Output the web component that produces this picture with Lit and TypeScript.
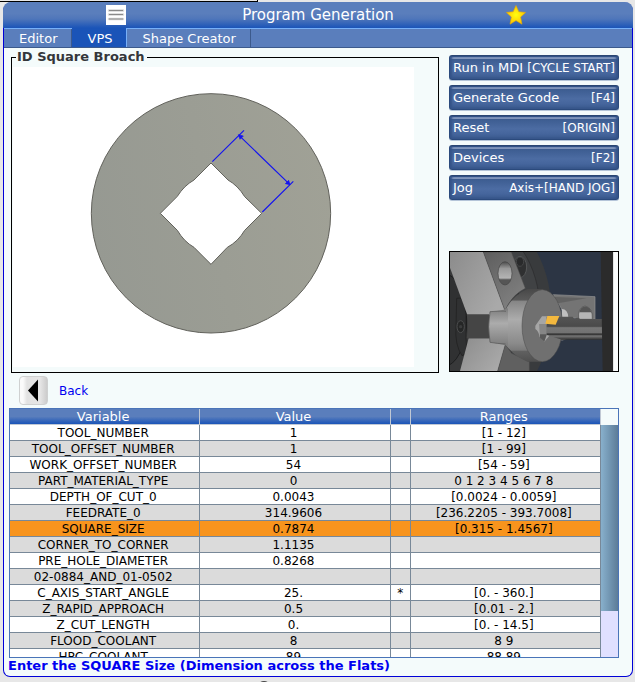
import { LitElement, html, css } from "lit";
import { customElement, property, state } from "lit/decorators.js";
import { classMap } from "lit/directives/class-map.js";

interface Row {
  name: string;
  value: string;
  mark?: string;
  range: string;
}

const ROWS: Row[] = [
  { name: "TOOL_NUMBER", value: "1", range: "[1 - 12]" },
  { name: "TOOL_OFFSET_NUMBER", value: "1", range: "[1 - 99]" },
  { name: "WORK_OFFSET_NUMBER", value: "54", range: "[54 - 59]" },
  { name: "PART_MATERIAL_TYPE", value: "0", range: "0 1 2 3 4 5 6 7 8" },
  { name: "DEPTH_OF_CUT_0", value: "0.0043", range: "[0.0024 - 0.0059]" },
  { name: "FEEDRATE_0", value: "314.9606", range: "[236.2205 - 393.7008]" },
  { name: "SQUARE_SIZE", value: "0.7874", range: "[0.315 - 1.4567]" },
  { name: "CORNER_TO_CORNER", value: "1.1135", range: "" },
  { name: "PRE_HOLE_DIAMETER", value: "0.8268", range: "" },
  { name: "02-0884_AND_01-0502", value: "", range: "" },
  { name: "C_AXIS_START_ANGLE", value: "25.", mark: "*", range: "[0. - 360.]" },
  { name: "Z_RAPID_APPROACH", value: "0.5", range: "[0.01 - 2.]" },
  { name: "Z_CUT_LENGTH", value: "0.", range: "[0. - 14.5]" },
  { name: "FLOOD_COOLANT", value: "8", range: "8 9" },
  { name: "HPC_COOLANT", value: "89", range: "88 89" },
];

const ACTIONS = [
  { label: "Run in MDI", key: "[CYCLE START]" },
  { label: "Generate Gcode", key: "[F4]" },
  { label: "Reset", key: "[ORIGIN]" },
  { label: "Devices", key: "[F2]" },
  { label: "Jog", key: "Axis+[HAND JOG]" },
];

const TABS = ["Editor", "VPS", "Shape Creator"];

@customElement("broach-diagram")
class BroachDiagram extends LitElement {
  static styles = css`
    :host { display: block; background: #fff; }
    .art { display: block; width: 100%; height: 300px; }
  `;
  render() {
    return html`<svg class="art" viewBox="-201 -54 1203 900" role="img" aria-label="Square broach diagram">
      <defs>
        <linearGradient id="face" x1="0" y1="0.6" x2="1" y2="0.4">
          <stop offset="0" stop-color="#969992" />
          <stop offset="1" stop-color="#a0a196" />
        </linearGradient>
      </defs>
      <circle cx="393" cy="385" r="359" fill="url(#face)" stroke="#62625c" stroke-width="3" />
      <path
        d="M393 234L444 285Q474 302 494 335L545 385L494 436Q474 470 442 487L393 538L342 487Q312 470 292 436L241 385L292 334Q312 302 342 285Z"
        fill="#fff" stroke="#62625c" stroke-width="3" />
      <g stroke="#1414f0" stroke-width="3.5" fill="#1414f0">
        <path d="M397 230L492 136M547 381L640 289M477 151L629 298" fill="none" />
        <path d="M475 149L490 153L480 163ZM630 299L616 296L626 286Z" stroke-width="2" />
      </g>
    </svg>`;
  }
}

@customElement("machine-view")
class MachineView extends LitElement {
  static styles = css`
    :host { display: block; border: 1px solid #000; background: #fff; }
    .art { display: block; width: 100%; height: 119px; }
  `;
  render() {
    return html`<svg class="art" viewBox="30 21 504 357" preserveAspectRatio="none" role="img" aria-label="Machine view">
      <defs>
        <linearGradient id="jaw" x1="0" y1="0" x2="1" y2="0.6">
          <stop offset="0" stop-color="#8c8c8c" /><stop offset="1" stop-color="#a9a9a9" />
        </linearGradient>
        <linearGradient id="side" x1="0" y1="0" x2="0.6" y2="1">
          <stop offset="0" stop-color="#5d5d5d" /><stop offset="1" stop-color="#808080" />
        </linearGradient>
        <linearGradient id="hub" x1="0" y1="0" x2="0" y2="1">
          <stop offset="0" stop-color="#484848" /><stop offset="0.15" stop-color="#5a5a5a" />
          <stop offset="0.17" stop-color="#868686" /><stop offset="0.42" stop-color="#acacac" />
          <stop offset="0.75" stop-color="#8a8a8a" /><stop offset="0.84" stop-color="#7a7a7a" />
          <stop offset="0.86" stop-color="#606060" /><stop offset="1" stop-color="#505050" />
        </linearGradient>
        <linearGradient id="collar" x1="0" y1="0" x2="0" y2="1">
          <stop offset="0" stop-color="#7c7c7c" /><stop offset="0.4" stop-color="#acacac" />
          <stop offset="1" stop-color="#7c7c7c" />
        </linearGradient>
        <linearGradient id="bore" x1="0" y1="0" x2="0" y2="1">
          <stop offset="0" stop-color="#4a4a4a" /><stop offset="0.3" stop-color="#9a9a9a" />
          <stop offset="0.7" stop-color="#b4b4b4" /><stop offset="0.78" stop-color="#555" />
        </linearGradient>
        <linearGradient id="bar" x1="0" y1="0" x2="0" y2="1">
          <stop offset="0" stop-color="#555" /><stop offset="0.42" stop-color="#4a4a4a" />
          <stop offset="0.48" stop-color="#777" /><stop offset="0.7" stop-color="#727272" />
          <stop offset="0.76" stop-color="#2a2a2a" /><stop offset="0.84" stop-color="#777" />
          <stop offset="1" stop-color="#303030" />
        </linearGradient>
      </defs>
      <rect x="30" y="21" width="460" height="357" fill="#2c3544" />
      <ellipse cx="130" cy="200" rx="204" ry="290" fill="#393b3d" />
      <ellipse cx="120" cy="200" rx="180" ry="260" fill="#404244" stroke="#2a2b2c" stroke-width="2" />
      <ellipse cx="90" cy="200" rx="150" ry="220" fill="#38393a" stroke="#2a2b2c" stroke-width="2" />
      <ellipse cx="10" cy="225" rx="70" ry="140" fill="#303132" stroke="#1d1e1f" stroke-width="3" />
      <path d="M50 160Q72 150 78 208V280Q84 330 66 332Q44 300 48 245Z" fill="#303132" stroke="#1e1e1e" stroke-width="2" />
      <ellipse cx="62" cy="245" rx="11" ry="18" fill="#252626" stroke="#4c4d4e" stroke-width="3" />
      <circle cx="62" cy="245" r="5" fill="#3b3c3d" />
      <ellipse cx="240" cy="66" rx="20" ry="32" fill="#2f3031" stroke="#555758" stroke-width="3" />
      <ellipse cx="240" cy="50" rx="11" ry="14" fill="#292a2b" stroke="#525354" stroke-width="2" />
      <path d="M30 21H130L195 197L150 210H82L30 68Z" fill="url(#jaw)" />
      <path d="M130 21H214L256 130Q215 150 195 197Z" fill="url(#side)" stroke="#4a4a4a" stroke-width="1.5" />
      <ellipse cx="195" cy="85" rx="21" ry="35" fill="url(#bore)" stroke="#454545" stroke-width="2" />
      <path d="M86 280H150L196 300L173 378H60Z" fill="url(#jaw)" />
      <path d="M196 298L173 378H268V350L215 325Z" fill="#606060" stroke="#484848" stroke-width="1.5" />
      <path d="M80 208H148V280H80Q86 242 80 208Z" fill="#454545" />
      <path d="M340 149L465 155V223L380 218ZM365 286L382 280L365 278Z" fill="#747474" stroke="#969696" stroke-width="2" />
      <path d="M345 156L440 160L345 176Z" fill="#626262" />
      <path d="M365 192Q384 192 385 218H365Z" fill="#c0c0c0" />
      <path d="M416 223Q412 187 435 183Q459 187 457 223Z" fill="#b5b5b5" stroke="#4d4d4d" stroke-width="2" />
      <path d="M418 202Q421 185 436 184Q451 186 454 202Z" fill="#555" />
      <path d="M195 199Q213 154 262 132H310V350H262Q218 332 195 296Z" fill="url(#hub)" />
      <path d="M150 200Q190 197 204 190V302Q172 296 150 292Q142 245 150 200Z" fill="url(#collar)" />
      <path d="M198 199Q190 197 150 200Q142 245 150 292Q172 296 197 297" fill="none" stroke="#555" stroke-width="2" />
      <ellipse cx="307" cy="242" rx="61" ry="108" fill="#707070" stroke="#4b4b4b" stroke-width="1.5" />
      <path d="M286 242L306 214H330V270L313 290L299 276Q296 258 286 252Z" fill="#a6a6a6" />
      <path d="M299 237L320 239V270L313 290L300 278Z" fill="#585858" />
      <path d="M299 237H320V268H300Z" fill="#868686" />
      <path d="M320 215H398L403 222L410 218H416L420 222H488V284H366L320 270Z" fill="url(#bar)" />
      <path d="M322 213H358L347 239L316 236Z" fill="#f3b83e" />
      <path d="M482 21H520V378H488Z" fill="#2b2b2b" />
      <path d="M520 21H534V378H520Z" fill="#fbfdfd" />
    </svg>`;
  }
}

@customElement("action-button")
class ActionButton extends LitElement {
  @property() label = "";
  @property() key = "";
  static styles = css`
    :host { display: block; }
    .btn {
      display: flex; justify-content: space-between; align-items: center;
      box-sizing: border-box; width: 100%; height: 25px; margin: 0; padding: 0 3px;
      border: 1px solid #2b4a7c; border-top-color: #2b4672; border-radius: 3px;
      background: linear-gradient(#2f4f84 0 1px, #8095bb 1px 3px, #3c5c90 3px, #4c6ca3 13px, #45659c 18px, #38578b);
      box-shadow: inset 2px 0 2px #35548a, inset -2px 0 2px #35548a, 0 1px 0 #b4c4d8;
      color: #fff; font: 12px/16px "DejaVu Sans", sans-serif; white-space: nowrap;
    }
    .label { font-size: 13px; }
  `;
  render() {
    return html`<button class="btn" type="button">
      <span class="label">${this.label}</span><span>${this.key}</span>
    </button>`;
  }
}

@customElement("app-root")
class AppRoot extends LitElement {
  @state() tab = 1;
  @state() selected = 6;

  static styles = css`
    :host {
      display: flex; flex-direction: column; box-sizing: border-box; height: 100vh;
      padding: 0 2px 5px 3px; overflow: hidden; position: relative;
      background: #e7e7e7; color: #000; font: 12px/16px "DejaVu Sans", sans-serif;
    }
    .strip {
      flex: none; box-sizing: border-box; width: 41%; height: 2px; margin-left: -3px;
      border: solid #000; border-width: 0 1px 1px 0;
    }
    .window {
      flex: 1; min-height: 0; display: flex; flex-direction: column;
      border: 1px solid #0000d8; border-top: 0; border-radius: 9px 9px 7px 7px; background: #f4fbfb;
    }
    .titlebar {
      flex: none; display: grid; grid-template-columns: 1fr auto 1fr; align-items: center;
      height: 26px; margin: 0 -1px; border-radius: 8px 8px 0 0;
      background: linear-gradient(#5a7ebc 0 45%, #4f76ba 65%, #1a54b8); color: #fff;
    }
    .menu {
      justify-self: center; width: 20px; height: 20px; margin-right: 8px; padding: 0; border: 0; background: #fff;
    }
    .star { justify-self: center; width: 20px; height: 20px; }
    .menu svg, .star { display: block; }
    .title { margin: 0; padding: 0 5px; font-size: 15px; font-weight: 400; }
    .tabs {
      flex: none; display: flex; height: 20px; box-sizing: border-box;
      border-top: 1px solid #78b0f8; border-bottom: 1px solid #3c5a8c; background: #5a7ebc;
    }
    .tab {
      padding: 1px 14px 0 15px; border: 0; border-right: 1px solid #3c5a8c; background: none;
      color: #fff; font: 13px/16px "DejaVu Sans", sans-serif;
    }
    .tab.on { background: #1a54b8; border-color: #78b0f8; margin-top: -1px; padding-top: 2px; }
    .top {
      flex: none; display: grid; grid-template-columns: 1fr 170px; gap: 10px; padding: 0 13px 0 7px;
    }
    .panel { margin: 2px 0 0; padding: 3px 24px 5px 1px; border: 1px solid #000; min-width: 0; }
    .caption {
      padding: 0 2px 0 1px; margin-left: 3px; color: #33363a; font-size: 13px; line-height: 14px; font-weight: 700;
    }
    .side { display: flex; flex-direction: column; gap: 5px; padding: 7px 0 1px; }
    .side machine-view { margin-top: auto; }
    .backrow { flex: none; display: flex; align-items: center; gap: 11px; height: 35px; padding-left: 15px; }
    .back {
      width: 29px; height: 29px; padding: 0; border: 1px solid #cfd1d1; border-radius: 4px;
      background: linear-gradient(90deg, #fafafa 0 3px, #e2e2e2 7px, #e6e6e6 20px, #cccccc);
    }
    .back svg { display: block; margin: auto; }
    .backlabel { color: #0000f0; font-size: 12px; }
    .grid {
      flex: 1; min-height: 0; display: flex; margin: 0 13px 0 5px;
      border: 1px solid #4a74b8; overflow: hidden;
    }
    .data {
      flex: 1; width: 100%; min-width: 0; align-self: flex-start;
      table-layout: fixed; border-spacing: 0; text-align: center;
    }
    .narrow { width: 20px; }
    .data th, .data td {
      height: 13px; padding: 2px 3px 0 0; border-right: 1px solid #788898; border-bottom: 1px solid #788898;
      line-height: 13px; white-space: nowrap; font-weight: 400;
    }
    .data th {
      height: 15px; padding-top: 0; line-height: 15px; font-size: 13px;
      background: linear-gradient(#5a7ebc 0 50%, #1a54b8); border-color: #c0c8d4; color: #fff;
    }
    .data td { background: #fff; }
    .data td:nth-child(3) { padding-right: 0; }
    .data tr:nth-child(even) td { background: #dbdbdb; }
    .data tbody .on td, .data tbody .on:nth-child(even) td { background: #f8941d; }
    .scroll { flex: none; width: 17px; display: flex; flex-direction: column; padding-top: 16px; }
    .thumb { flex: 186; background: linear-gradient(90deg, #88b0cc, #5c7c98); }
    .track { flex: 46; background: #e0e0ff; }
    .status {
      flex: none; height: 18px; margin: 0; padding-left: 4px;
      color: #0000f0; font-size: 13px; line-height: 16px; font-weight: 700; white-space: nowrap;
    }
    .knob { position: absolute; left: 257px; bottom: -13px; width: 14px; height: 14px; border-radius: 50%; background: #444; }
  `;

  render() {
    return html`
      <div class="strip"></div>
      <main class="window">
        <header class="titlebar">
          <button class="menu" type="button" aria-label="Menu">
            <svg width="20" height="20" viewBox="0 0 20 20">
              <path d="M3 5.5H17M3 9.5H17M3 14H17" stroke="#d8d8d8" stroke-width="2.5" stroke-linecap="round" />
              <path d="M3 5.5H17M3 9.5H17M3 14H17" stroke="#8a8a8a" stroke-width="1" />
            </svg>
          </button>
          <h1 class="title">Program Generation</h1>
          <svg class="star" viewBox="0 0 20 20">
            <defs><radialGradient id="gold"><stop offset="0" stop-color="#ffff10" /><stop offset="1" stop-color="#ffc400" /></radialGradient></defs>
            <path d="M10 .5L12.8 6.8L19.6 7.4L14.6 12L16 19.2L10 15.6L4 19.2L5.4 12L.4 7.4L7.2 6.8Z" fill="url(#gold)" stroke="#e8a800" stroke-width=".6" />
          </svg>
        </header>
        <nav class="tabs">
          ${TABS.map((t, i) => html`<button type="button" class=${classMap({ tab: true, on: i === this.tab })}
            @click=${() => (this.tab = i)}>${t}</button>`)}
        </nav>
        <section class="top">
          <fieldset class="panel">
            <legend class="caption">ID Square Broach</legend>
            <broach-diagram></broach-diagram>
          </fieldset>
          <div class="side">
            ${ACTIONS.map((a) => html`<action-button .label=${a.label} .key=${a.key}></action-button>`)}
            <machine-view></machine-view>
          </div>
        </section>
        <div class="backrow">
          <button class="back" type="button" aria-labelledby="backlabel">
            <svg width="27" height="27" viewBox="0 0 27 27"><path d="M8 13.5L18 2.5V24.5Z" fill="#000" /></svg>
          </button>
          <span class="backlabel" id="backlabel">Back</span>
        </div>
        <div class="grid">
          <table class="data">
            <colgroup><col /><col /><col class="narrow" /><col /></colgroup>
            <thead><tr><th>Variable</th><th>Value</th><th></th><th>Ranges</th></tr></thead>
            <tbody>
              ${ROWS.map((r, i) => html`<tr class=${classMap({ on: i === this.selected })} @click=${() => (this.selected = i)}>
                <td>${r.name}</td><td>${r.value}</td><td>${r.mark ?? ""}</td><td>${r.range}</td>
              </tr>`)}
            </tbody>
          </table>
          <div class="scroll"><div class="thumb"></div><div class="track"></div></div>
        </div>
        <p class="status">Enter the SQUARE Size (Dimension across the Flats)</p>
      </main>
      <div class="knob"></div>
    `;
  }
}
